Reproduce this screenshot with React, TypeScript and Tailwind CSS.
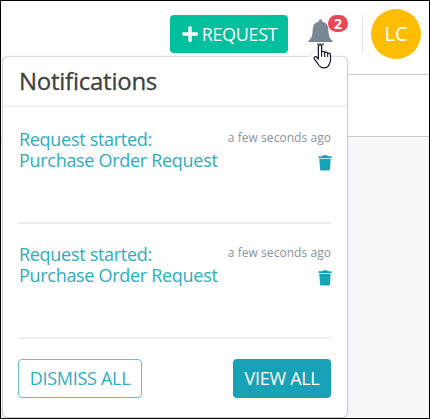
import React from "react";
import { FaPlus } from "react-icons/fa";

const items = [
  { id: 1, title: "Request started:", name: "Purchase Order Request", time: "a few seconds ago" },
  { id: 2, title: "Request started:", name: "Purchase Order Request", time: "a few seconds ago" },
];

function BellIcon() {
  return (
    <svg width="25" height="28" viewBox="0 0 25 28" fill="#788793">
      <path d="M11 2.6V1.5Q11 .2 12.5.2T14 1.5v1.1q5.900 1.200 6.300 7.600.2 6.800 1.800 9 1 1.300 2.100 2 .6.700.4 1.800H.4Q.2 21.900.8 21.200q1.100-.7 2.100-2 1.600-2.200 1.800-9Q5.100 3.800 11 2.600z" />
      <path d="M8.700 24.200h7.600q-.3 3.300-3.800 3.300t-3.800-3.300z" />
    </svg>
  );
}

function TrashIcon() {
  return (
    <svg width="14" height="16" viewBox="0 0 14 16" fill="#17a2b8">
      <path d="M.5 1.300h3.800L5 .3h4l.7 1h3.800v1.900H.5z" />
      <path d="M1.300 3.900h11.400l-.8 10.700q-.1.900-1 .9H3.100q-.9 0-1-.9z" />
    </svg>
  );
}

function HandCursor() {
  return (
    <svg className="absolute left-[312px] top-[43px] z-20" width="20" height="26" viewBox="0 0 20 26">
      <path
        d="M5.400 15V2.800Q5.400 1 7 1t1.600 1.800v5.700q.2-1.100 1.500-1.100t1.600 1.500q.3-.9 1.500-.8t1.500 1.500q.3-.7 1.400-.5 1.400.3 1.400 1.800v4.800q0 2.700-1.300 4.600Q15 23.900 10.800 23.900q-3.200 0-4.800-2.400L1.400 14.800q-.7-1.500.5-2 1.200-.4 2.100.7z"
        fill="#fff"
        stroke="#16162a"
        strokeWidth="1.2"
        strokeLinejoin="round"
      />
      <path d="M8.600 8.500v4.300M11.700 8.900v4M14.700 9.600v3.500" stroke="#16162a" strokeWidth="1.100" />
    </svg>
  );
}

function Popover() {
  return (
    <section className="absolute left-[1px] top-[55px] flex h-[362px] w-[346px] flex-col rounded-md border border-[#cfcfd1] border-t-[#dcdcdc] bg-white shadow-[0_0_1px_#bbb]">
      <svg className="absolute left-[303px] top-[-11px]" width="28" height="12" viewBox="0 0 28 12">
        <path d="M1 12 14 0l13 12z" fill="#fff" />
        <path d="M2 11 14 0l12 11" fill="none" stroke="#d4d4d4" />
      </svg>
      <header className="flex h-[50px] shrink-0 items-center border-b-2 border-[#f1f1f1] pl-4">
        <h1 className="whitespace-nowrap text-[24px] leading-none tracking-[-0.25px] text-[#404040] [-webkit-text-stroke:0.3px_#404040]">Notifications</h1>
      </header>
      <ul className="flex flex-col pl-[15px] pr-4 pt-[2px]">
        {items.map((n) => (
          <li key={n.id} className="flex h-[115px] justify-between border-b-2 border-[#ededed] pt-[20px]">
            <div className="whitespace-nowrap pl-px text-[18px] leading-[21px] tracking-[-0.3px] text-[#2fabbe]">
              <p>{n.title}</p>
              <p>{n.name}</p>
            </div>
            <div className="flex flex-col items-end pt-px">
              <span className="whitespace-nowrap text-[12px] leading-4 tracking-[0.05px] text-[#8a929b]">{n.time}</span>
              <span className="-mr-px mt-[9px]">
                <TrashIcon />
              </span>
            </div>
          </li>
        ))}
      </ul>
      <footer className="flex justify-between pl-[15px] pr-4 pt-[20px]">
        <button className="h-[39px] w-[124px] whitespace-nowrap rounded border border-[#5fc1cf] text-[18px] tracking-[-0.3px] text-[#2fabbe]">DISMISS ALL</button>
        <button className="h-[39px] w-[98px] whitespace-nowrap rounded bg-[#17a2b8] text-[18px] tracking-[-0.3px] text-white">VIEW ALL</button>
      </footer>
    </section>
  );
}

export default function App() {
  return (
    <div className="relative flex h-[419px] w-[430px] flex-col overflow-hidden border border-black bg-[#f7f8fb] font-['Open_Sans','Noto_Sans',sans-serif]">
      <nav className="flex h-[74px] shrink-0 items-start border-b border-[#c9cbcf] bg-white pl-[169px]">
        <button className="mt-[14px] flex h-[38px] w-[118px] items-center justify-center gap-[3px] rounded bg-[#00bf9c] text-[18px] text-white">
          <FaPlus className="size-[18px]" />
          <span className="tracking-[-0.35px]">REQUEST</span>
        </button>
        <div className="relative z-10 ml-5 mt-[18px]">
          <BellIcon />
          <span className="absolute left-[20px] top-[-4px] flex h-[17px] w-5 items-center justify-center rounded-full bg-[#ed4757] text-[14px] font-bold leading-none text-white">2</span>
        </div>
        <div className="ml-[29px] mt-[14px] h-[38px] w-px bg-[#dfe2e6]" />
        <div className="ml-[8px] mt-2 flex size-[50px] items-center justify-center rounded-full bg-[#fcbd03] text-[20px] text-white">LC</div>
      </nav>
      <div className="h-[62px] shrink-0 border-b border-[#c9cbcf] bg-white" />
      <Popover />
      <HandCursor />
    </div>
  );
}
